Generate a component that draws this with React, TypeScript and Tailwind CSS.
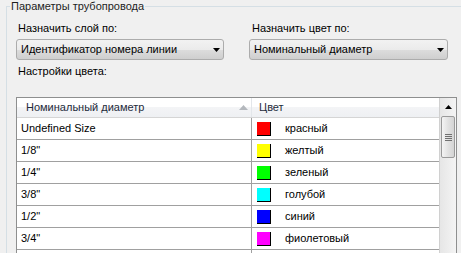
const rows = [
  { size: "Undefined Size", color: "#ff0000", name: "красный" },
  { size: '1/8"', color: "#ffff00", name: "желтый" },
  { size: '1/4"', color: "#00ff00", name: "зеленый" },
  { size: '3/8"', color: "#00ffff", name: "голубой" },
  { size: '1/2"', color: "#0000ff", name: "синий" },
  { size: '3/4"', color: "#ff00ff", name: "фиолетовый" },
];

function DownArrow() {
  return (
    <svg width="7" height="4" viewBox="0 0 7 4" className="shrink-0">
      <path d="M0 0h7L3.5 4z" fill="#000" />
    </svg>
  );
}

function Combo({ value, width }: { value: string; width: string }) {
  return (
    <div
      className={`${width} flex h-[21px] items-center justify-between rounded-[3px] border border-[#acacac] bg-[linear-gradient(to_bottom,#f2f2f2,#ebebeb_50%,#dddddd_50%,#cfcfcf)] pl-[4px] pr-[3px]`}
    >
      <span>{value}</span>
      <DownArrow />
    </div>
  );
}

function Scrollbar() {
  return (
    <div className="flex w-[17px] shrink-0 flex-col border-l border-[#d0d0d0] bg-[linear-gradient(to_right,#e6e6e6,#f4f4f4)]">
      <div className="flex h-[17px] items-center justify-center">
        <svg width="7" height="4" viewBox="0 0 7 4">
          <path d="M3.5 0L7 4H0z" fill="#000" />
        </svg>
      </div>
      <div className="mx-[1px] mt-[1px] flex h-[42px] flex-col items-center justify-center gap-[1px] rounded-[2px] border border-[#9a9a9a] bg-[linear-gradient(to_right,#f4f4f4,#e2e2e2_50%,#d4d4d4)]">
        <div className="h-px w-[7px] bg-[#707070]" />
        <div className="h-px w-[7px] bg-[#707070]" />
        <div className="h-px w-[7px] bg-[#707070]" />
        <div className="h-px w-[7px] bg-[#707070]" />
      </div>
    </div>
  );
}

export default function App() {
  return (
    <div className="h-[253px] w-[461px] overflow-hidden bg-[#f0f0f0] pl-[6px] pt-[6px] font-['Liberation_Sans',Arial,sans-serif] text-[11px] leading-[13px] text-black">
      <div className="relative h-[300px] w-[480px] border-l border-t border-[#d5dfe5] pl-[9px] pt-[15px]">
        <span className="absolute -top-[7px] left-[3px] bg-[#f0f0f0] px-[1px] text-[#1e1e1e]">
          Параметры трубопровода
        </span>

        <div className="flex gap-[25px]">
          <div className="flex flex-col">
            <span className="ml-[2px]">Назначить слой по:</span>
            <div className="mt-[4px]">
              <Combo value="Идентификатор номера линии" width="w-[208px]" />
            </div>
          </div>
          <div className="flex flex-col">
            <span className="ml-[3px]">Назначить цвет по:</span>
            <div className="mt-[4px]">
              <Combo value="Номинальный диаметр" width="w-[199px]" />
            </div>
          </div>
        </div>

        <div className="ml-[2px] mt-[5px]">Настройки цвета:</div>

        <div className="mt-[19px] flex h-[200px] w-[441px] overflow-hidden border border-[#8e8f8f] bg-white">
          <div className="flex w-[422px] flex-col">
            <div className="flex h-[20px] border-b border-[#d5d5d5] bg-[linear-gradient(to_bottom,#ffffff,#ffffff_50%,#f3f4f6_50%,#eef0f3)] text-[#1e2b3c]">
              <div className="flex w-[235px] items-center justify-between border-r border-[#e3e6ea] pl-[9px] pr-[3px]">
                <span>Номинальный диаметр</span>
                <svg width="9" height="5" viewBox="0 0 9 5">
                  <path d="M4.5 0L9 5H0z" fill="#b4b8bd" />
                </svg>
              </div>
              <div className="flex items-center pl-[7px]">Цвет</div>
            </div>
            {rows.map((r) => (
              <div key={r.size} className="flex h-[22px] border-b border-[#a0a0a0]">
                <div className="flex w-[235px] items-center border-r border-[#a0a0a0] pl-[4px]">
                  {r.size}
                </div>
                <div className="flex items-center pl-[5px]">
                  <div
                    className="h-[14px] w-[14px] border-b border-r border-black"
                    style={{ backgroundColor: r.color }}
                  />
                  <span className="ml-[14px]">{r.name}</span>
                </div>
              </div>
            ))}
            {/* next row, scrolled out of view */}
            <div className="flex h-[22px]">
              <div className="w-[235px] border-r border-[#a0a0a0]" />
            </div>
          </div>
          <Scrollbar />
        </div>
      </div>
    </div>
  );
}
